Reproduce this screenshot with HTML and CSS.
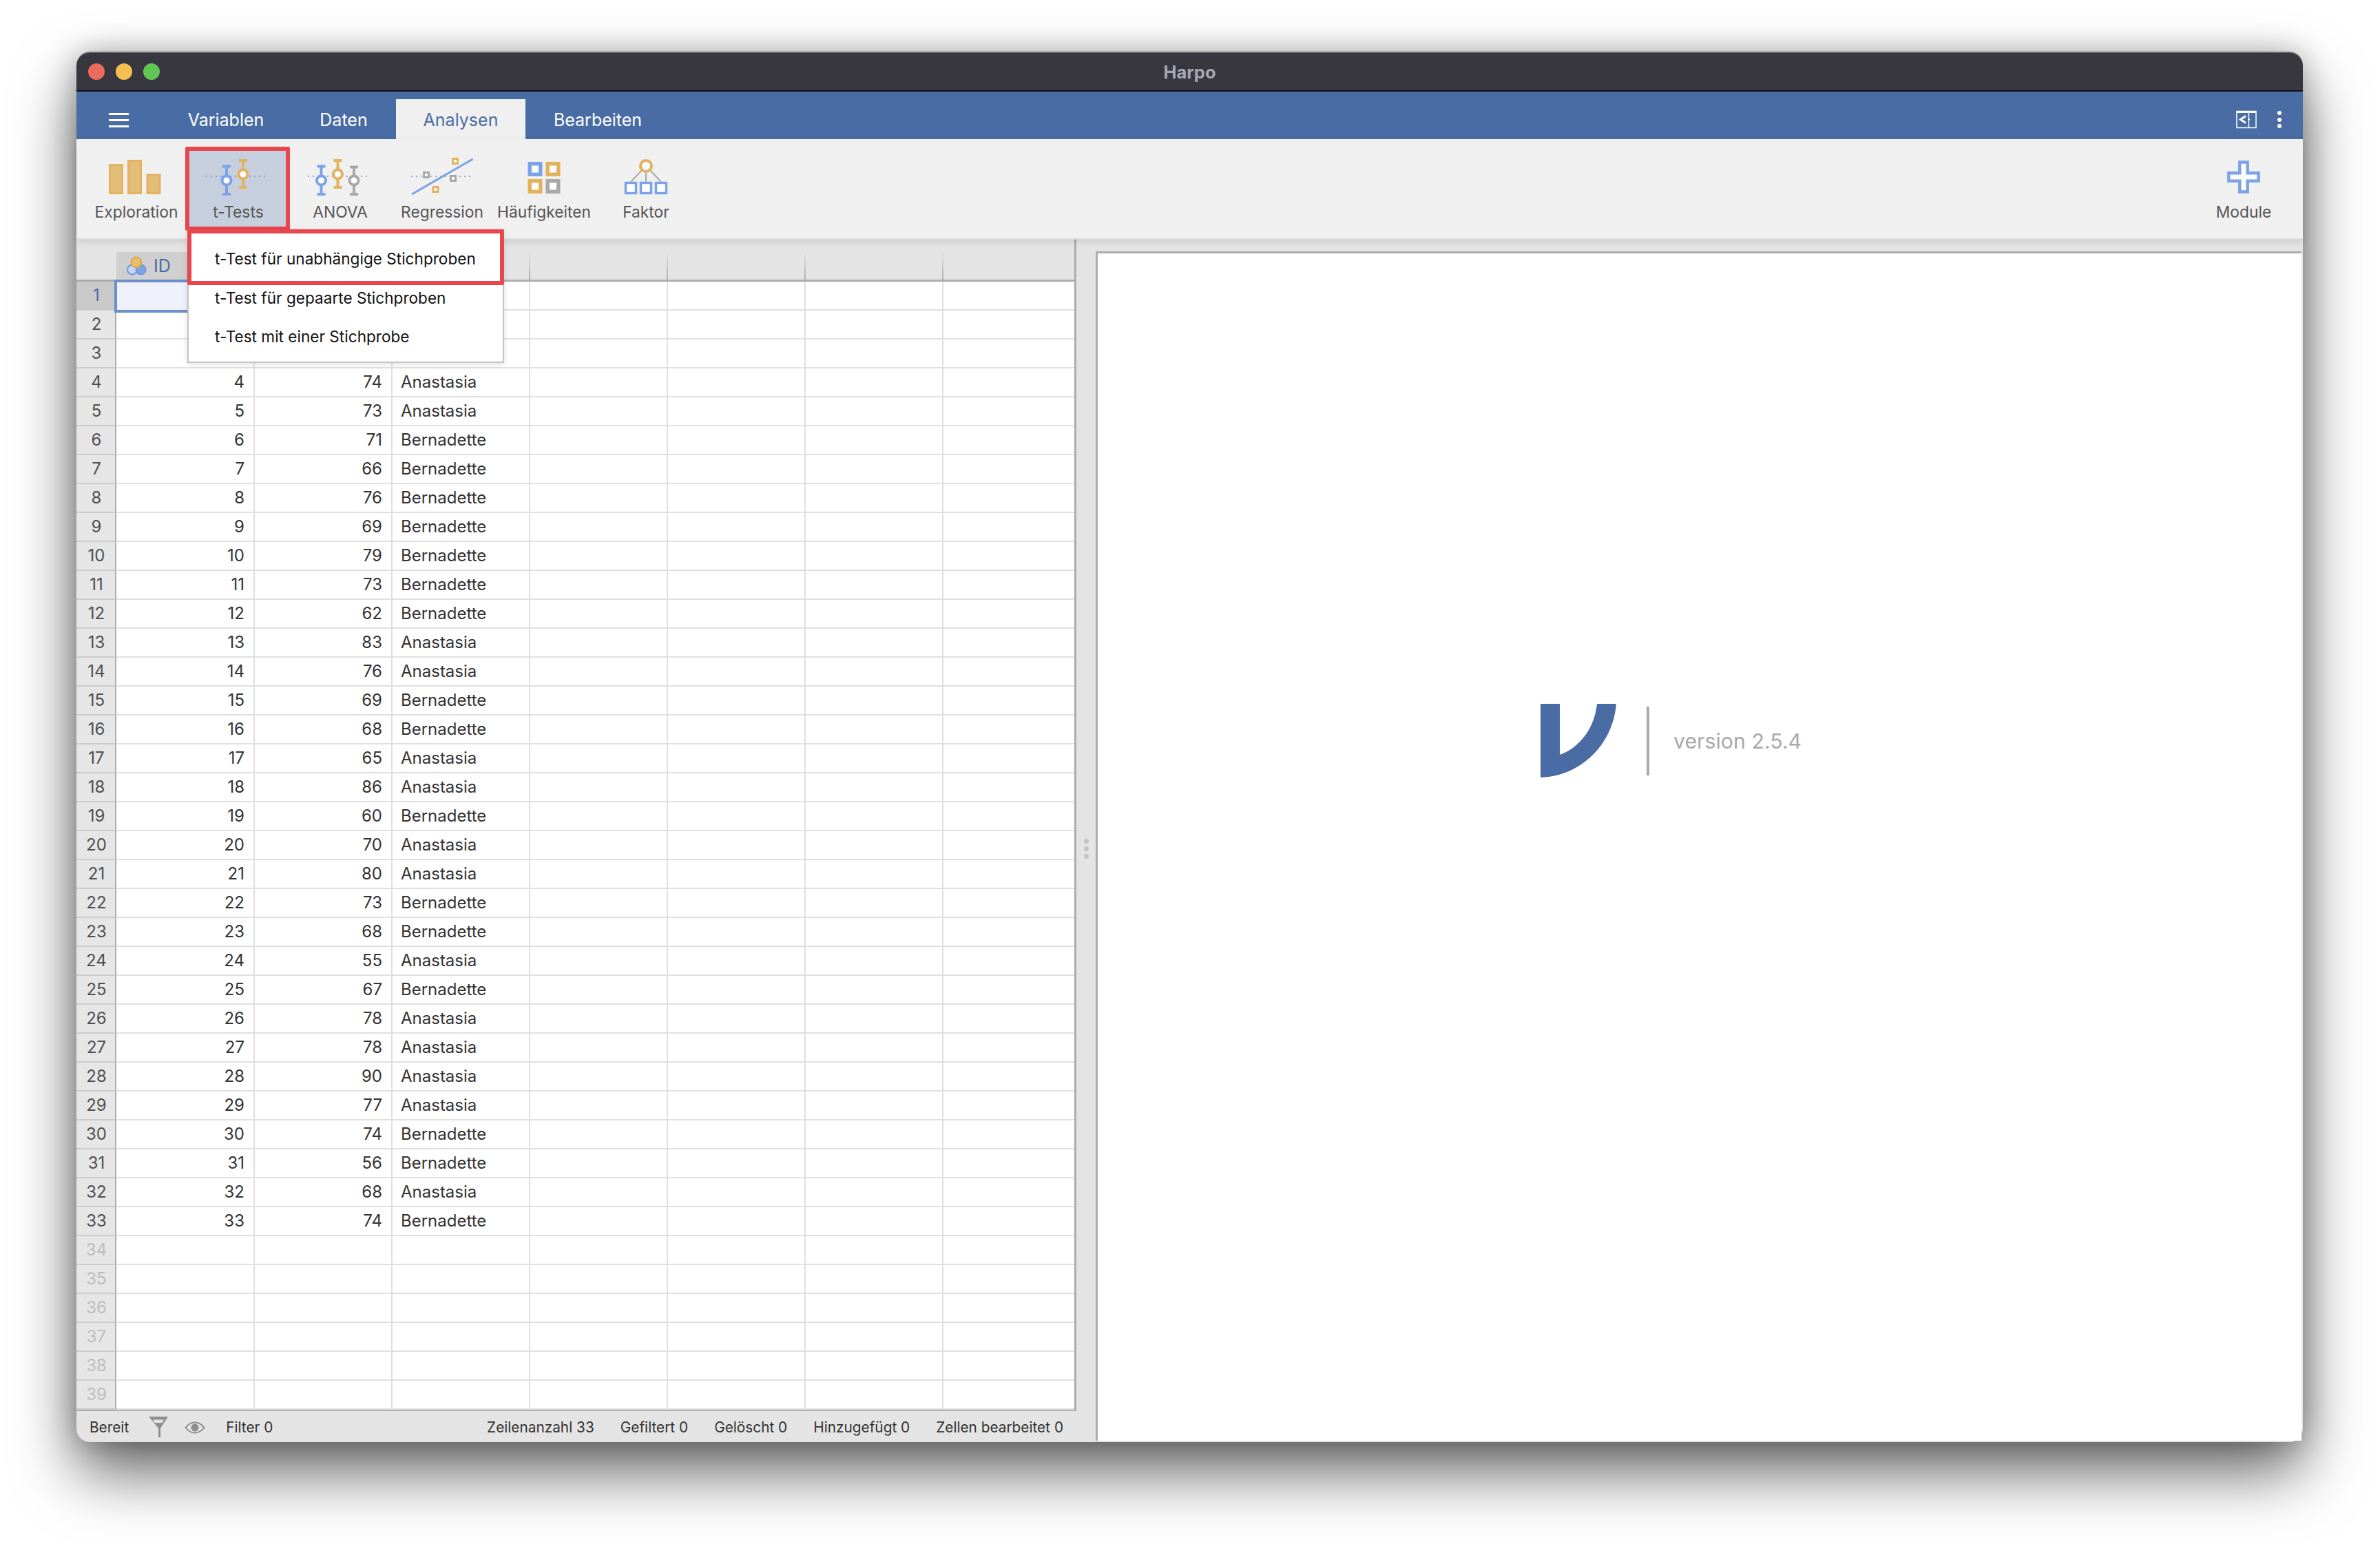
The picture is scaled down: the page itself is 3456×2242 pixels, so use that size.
FILE: index.html
```html
<!DOCTYPE html>
<html lang="de">
  <head>
    <meta charset="UTF-8" />
    <title>Harpo</title>
    <link rel="stylesheet" href="styles.css">
  </head>
  <body>
    <div class="window">
      <div class="titlebar">
        <div class="lights">
          <span class="light red"></span>
          <span class="light yellow"></span>
          <span class="light green"></span>
        </div>
        <div class="title">Harpo</div>
      </div>

      <div class="tabbar">
        <div class="burger"><span></span><span></span><span></span></div>
        <div class="tab tab-variablen">Variablen</div>
        <div class="tab tab-daten">Daten</div>
        <div class="tab tab-analysen">Analysen</div>
        <div class="tab tab-bearbeiten">Bearbeiten</div>
        <div class="tab-tools">
          <svg class="split-icon" width="30" height="27" viewBox="0 0 30 27">
            <rect x="1" y="1.5" width="28" height="24" fill="none" stroke="#fff" stroke-width="1.5" />
            <path d="M1 3h28" stroke="#fff" stroke-width="2" />
            <path d="M18.5 2v23" stroke="#fff" stroke-width="1.5" />
            <path d="M14 8.5L6.5 13.5L14 18.500" fill="none" stroke="#fff" stroke-width="3" />
            <path d="M17 13.500h3" stroke="#fff" stroke-width="1.500" />
          </svg>
          <div class="dots"><span></span><span></span><span></span></div>
        </div>
      </div>

      <div class="toolbar">
        <div class="tool">
          <svg viewBox="0 0 148 60" width="148" height="60">
            <g fill="#e3be78" stroke="#e3b35f" stroke-width="3">
              <rect x="35.500" y="11.500" width="18" height="41" />
              <rect x="62.500" y="5.500" width="18" height="47" />
              <rect x="90" y="26" width="18" height="26.500" />
            </g>
          </svg>
          <div class="tool-label">Exploration</div>
        </div>
        <div class="tool active">
          <svg viewBox="0 0 148 60" width="148" height="60">
            <path d="M27 28H117" stroke="#6f93d6" stroke-width="1.500" stroke-dasharray="2 5" />
            <path d="M51 13.500H63M57 13.500V54M51 54H63" fill="none" stroke="#7ba3e6" stroke-width="4" />
            <circle cx="57" cy="34" r="6.500" fill="#fff" stroke="#7ba3e6" stroke-width="4" />
            <path d="M75 5H87M81 5V44M75 44H87" fill="none" stroke="#e3b25c" stroke-width="4" />
            <circle cx="81" cy="25" r="6.500" fill="#fff" stroke="#e3b25c" stroke-width="4" />
          </svg>
          <div class="tool-label">t-Tests</div>
        </div>
        <div class="tool">
          <svg viewBox="0 0 148 60" width="148" height="60">
            <path d="M27 28H117" stroke="#6f93d6" stroke-width="1.500" stroke-dasharray="2 5" />
            <path d="M40.500 13.500H52.500M46.500 13.500V54M40.500 54H52.500" fill="none" stroke="#7ba3e6" stroke-width="4" />
            <circle cx="46.500" cy="34" r="6.500" fill="#fff" stroke="#7ba3e6" stroke-width="4" />
            <path d="M64.500 5H76.500M70.500 5V44M64.500 44H76.500" fill="none" stroke="#e3b25c" stroke-width="4" />
            <circle cx="70.500" cy="25" r="6.500" fill="#fff" stroke="#e3b25c" stroke-width="4" />
            <path d="M88 14.500H100M94 14.500V54M88 54H100" fill="none" stroke="#a8a8a8" stroke-width="4" />
            <circle cx="94" cy="34" r="6.500" fill="#fff" stroke="#a8a8a8" stroke-width="4" />
          </svg>
          <div class="tool-label">ANOVA</div>
        </div>
        <div class="tool">
          <svg viewBox="0 0 148 60" width="148" height="60">
            <path d="M29 28H120" stroke="#6f93d6" stroke-width="1.500" stroke-dasharray="2 5" />
            <path d="M30 54L118.500 3" stroke="#7ba3e6" stroke-width="3" />
            <g fill="#fff" stroke-width="3">
              <rect x="89.500" y="2.500" width="7" height="7" stroke="#e3b25c" />
              <rect x="47.500" y="22.500" width="7" height="7" stroke="#a8a8a8" />
              <rect x="86.500" y="27.500" width="7" height="7" stroke="#a8a8a8" />
              <rect x="61" y="43.500" width="7" height="7" stroke="#e3b25c" />
            </g>
          </svg>
          <div class="tool-label">Regression</div>
        </div>
        <div class="tool">
          <svg viewBox="0 0 148 60" width="148" height="60">
            <g fill="#fff" stroke-width="5.500">
              <rect x="53.250" y="9.750" width="15.500" height="15.500" stroke="#7ba3e6" />
              <rect x="79.250" y="9.750" width="15.500" height="15.500" stroke="#e3b25c" />
              <rect x="53.250" y="34.750" width="15.500" height="15.500" stroke="#e3b25c" />
              <rect x="79.250" y="34.750" width="15.500" height="15.500" stroke="#a8a8a8" />
            </g>
          </svg>
          <div class="tool-label">Häufigkeiten</div>
        </div>
        <div class="tool">
          <svg viewBox="0 0 148 60" width="148" height="60">
            <path d="M74 13L52 36M74 13V36M74 13L96 36" stroke="#a8a8a8" stroke-width="2" />
            <circle cx="74" cy="13" r="8" fill="#fff" stroke="#e3b25c" stroke-width="4" />
            <g fill="#fff" stroke="#7ba3e6" stroke-width="3.500">
              <rect x="44.500" y="37.500" width="15" height="15" />
              <rect x="66.500" y="37.500" width="15" height="15" />
              <rect x="88.500" y="37.500" width="15" height="15" />
            </g>
          </svg>
          <div class="tool-label">Faktor</div>
        </div>
        <div class="tool tool-module">
          <svg viewBox="0 0 148 60" width="148" height="60">
            <path d="M68.300 7.400H79.700V23.300H95.600V34.700H79.700V50.600H68.300V34.700H52.400V23.300H68.300Z" fill="#fff" stroke="#7ba3e6" stroke-width="4.500" />
          </svg>
          <div class="tool-label">Module</div>
        </div>
      </div>

      <!-- dropdown of the t-Tests button -->
      <div class="menu">
        <div class="menu-marker"></div>
        <div class="menu-item">t-Test für unabhängige Stichproben</div>
        <div class="menu-item">t-Test für gepaarte Stichproben</div>
        <div class="menu-item">t-Test mit einer Stichprobe</div>
      </div>

      <div class="main">
        <div class="data-panel">
          <div class="table-wrap">
            <table class="sheet">
              <colgroup>
                <col class="c-head" /><col class="c-first" /><col class="c-std" /><col class="c-std" />
                <col class="c-std" /><col class="c-std" /><col class="c-std" /><col class="c-last" />
              </colgroup>
              <thead>
                <tr>
                  <th class="corner"></th>
                  <th>
                    <div class="col-head filled">
                      <svg width="40" height="28" viewBox="0 0 40 28">
                        <circle cx="9" cy="19.500" r="7" fill="#c4d6f5" stroke="#6f97e0" stroke-width="2" />
                        <circle cx="21.500" cy="19.500" r="7" fill="#7ba3e6" stroke="#6f97e0" stroke-width="2" />
                        <circle cx="15" cy="9" r="7.500" fill="#e8bd6a" stroke="#d9a64c" stroke-width="2" />
                      </svg>
                      <span class="col-name">ID</span>
                    </div>
                  </th>
                  <th><div class="col-head"></div></th>
                  <th><div class="col-head"></div></th>
                  <th><div class="col-head"></div></th>
                  <th><div class="col-head"></div></th>
                  <th><div class="col-head"></div></th>
                  <th><div class="col-head last"></div></th>
                </tr>
              </thead>
              <tbody>
                <tr><th class="selected">1</th><td class="cursor"></td><td></td><td></td><td></td><td></td><td></td><td></td></tr>
                <tr><th>2</th><td></td><td></td><td></td><td></td><td></td><td></td><td></td></tr>
                <tr><th>3</th><td></td><td></td><td></td><td></td><td></td><td></td><td></td></tr>
                <tr><th>4</th><td>4</td><td>74</td><td class="txt">Anastasia</td><td></td><td></td><td></td><td></td></tr>
                <tr><th>5</th><td>5</td><td>73</td><td class="txt">Anastasia</td><td></td><td></td><td></td><td></td></tr>
                <tr><th>6</th><td>6</td><td>71</td><td class="txt">Bernadette</td><td></td><td></td><td></td><td></td></tr>
                <tr><th>7</th><td>7</td><td>66</td><td class="txt">Bernadette</td><td></td><td></td><td></td><td></td></tr>
                <tr><th>8</th><td>8</td><td>76</td><td class="txt">Bernadette</td><td></td><td></td><td></td><td></td></tr>
                <tr><th>9</th><td>9</td><td>69</td><td class="txt">Bernadette</td><td></td><td></td><td></td><td></td></tr>
                <tr><th>10</th><td>10</td><td>79</td><td class="txt">Bernadette</td><td></td><td></td><td></td><td></td></tr>
                <tr><th>11</th><td>11</td><td>73</td><td class="txt">Bernadette</td><td></td><td></td><td></td><td></td></tr>
                <tr><th>12</th><td>12</td><td>62</td><td class="txt">Bernadette</td><td></td><td></td><td></td><td></td></tr>
                <tr><th>13</th><td>13</td><td>83</td><td class="txt">Anastasia</td><td></td><td></td><td></td><td></td></tr>
                <tr><th>14</th><td>14</td><td>76</td><td class="txt">Anastasia</td><td></td><td></td><td></td><td></td></tr>
                <tr><th>15</th><td>15</td><td>69</td><td class="txt">Bernadette</td><td></td><td></td><td></td><td></td></tr>
                <tr><th>16</th><td>16</td><td>68</td><td class="txt">Bernadette</td><td></td><td></td><td></td><td></td></tr>
                <tr><th>17</th><td>17</td><td>65</td><td class="txt">Anastasia</td><td></td><td></td><td></td><td></td></tr>
                <tr><th>18</th><td>18</td><td>86</td><td class="txt">Anastasia</td><td></td><td></td><td></td><td></td></tr>
                <tr><th>19</th><td>19</td><td>60</td><td class="txt">Bernadette</td><td></td><td></td><td></td><td></td></tr>
                <tr><th>20</th><td>20</td><td>70</td><td class="txt">Anastasia</td><td></td><td></td><td></td><td></td></tr>
                <tr><th>21</th><td>21</td><td>80</td><td class="txt">Anastasia</td><td></td><td></td><td></td><td></td></tr>
                <tr><th>22</th><td>22</td><td>73</td><td class="txt">Bernadette</td><td></td><td></td><td></td><td></td></tr>
                <tr><th>23</th><td>23</td><td>68</td><td class="txt">Bernadette</td><td></td><td></td><td></td><td></td></tr>
                <tr><th>24</th><td>24</td><td>55</td><td class="txt">Anastasia</td><td></td><td></td><td></td><td></td></tr>
                <tr><th>25</th><td>25</td><td>67</td><td class="txt">Bernadette</td><td></td><td></td><td></td><td></td></tr>
                <tr><th>26</th><td>26</td><td>78</td><td class="txt">Anastasia</td><td></td><td></td><td></td><td></td></tr>
                <tr><th>27</th><td>27</td><td>78</td><td class="txt">Anastasia</td><td></td><td></td><td></td><td></td></tr>
                <tr><th>28</th><td>28</td><td>90</td><td class="txt">Anastasia</td><td></td><td></td><td></td><td></td></tr>
                <tr><th>29</th><td>29</td><td>77</td><td class="txt">Anastasia</td><td></td><td></td><td></td><td></td></tr>
                <tr><th>30</th><td>30</td><td>74</td><td class="txt">Bernadette</td><td></td><td></td><td></td><td></td></tr>
                <tr><th>31</th><td>31</td><td>56</td><td class="txt">Bernadette</td><td></td><td></td><td></td><td></td></tr>
                <tr><th>32</th><td>32</td><td>68</td><td class="txt">Anastasia</td><td></td><td></td><td></td><td></td></tr>
                <tr><th>33</th><td>33</td><td>74</td><td class="txt">Bernadette</td><td></td><td></td><td></td><td></td></tr>
                <tr class="unused"><th>34</th><td></td><td></td><td></td><td></td><td></td><td></td><td></td></tr>
                <tr class="unused"><th>35</th><td></td><td></td><td></td><td></td><td></td><td></td><td></td></tr>
                <tr class="unused"><th>36</th><td></td><td></td><td></td><td></td><td></td><td></td><td></td></tr>
                <tr class="unused"><th>37</th><td></td><td></td><td></td><td></td><td></td><td></td><td></td></tr>
                <tr class="unused"><th>38</th><td></td><td></td><td></td><td></td><td></td><td></td><td></td></tr>
                <tr class="unused"><th>39</th><td></td><td></td><td></td><td></td><td></td><td></td><td></td></tr>
              </tbody>
            </table>
          </div>
          <div class="statusbar">
            <span class="status-ready">Bereit</span>
            <svg class="funnel" width="28" height="31" viewBox="0 0 28 31">
              <path d="M0 0H28L17 17V31L14 29.500V17Z" fill="#8e8e8e" />
              <path d="M6 4.500H22L19.500 9H8.500Z" fill="#e4e4e4" />
            </svg>
            <svg class="eye" width="30" height="20" viewBox="0 0 30 20">
              <path d="M1.500 10C9 0 21 0 28.500 10C21 20 9 20 1.500 10Z" fill="none" stroke="#8e8e8e" stroke-width="2" />
              <circle cx="15" cy="10" r="5.500" fill="#8e8e8e" />
            </svg>
            <span class="status-filter">Filter 0</span>
            <span class="status-right">
              <span>Zeilenanzahl 33</span>
              <span>Gefiltert 0</span>
              <span>Gelöscht 0</span>
              <span>Hinzugefügt 0</span>
              <span>Zellen bearbeitet 0</span>
            </span>
          </div>
        </div>

        <div class="splitter"><span></span><span></span><span></span></div>

        <div class="results">
          <div class="brand">
            <svg width="110" height="107" viewBox="0 0 110 107">
              <path d="M0 0H28V74C55 64 78 38 82 0H110C105 60 58 105 0 107Z" fill="#4a6ca5" />
            </svg>
            <span class="brand-line"></span>
            <span class="version">version 2.5.4</span>
          </div>
        </div>
      </div>
    </div>
  </body>
</html>
```

FILE: styles.css
```css
* {
  box-sizing: border-box;
}
html,
body {
  height: 100%;
}
body {
  margin: 0;
  padding: 75px 112px 148px 111px;
  background-color: #fff;
  font-family: Inter, Roboto, "Liberation Sans", sans-serif;
  overflow: hidden;
}
.window {
  position: relative;
  display: flex;
  flex-direction: column;
  height: 2019px;
  border-radius: 20px;
  background-color: #e4e4e4;
  box-shadow: 0 44px 90px rgba(0, 0, 0, 0.6), 0 0 40px rgba(0, 0, 0, 0.25);
}

/* title bar */
.titlebar {
  position: relative;
  display: flex;
  align-items: center;
  justify-content: center;
  flex: none;
  height: 58px;
  border-radius: 20px 20px 0 0;
  border-top: 2px solid #6a6a6e;
  border-bottom: 2px solid #111;
  background-color: #38363f;
}
.lights {
  position: absolute;
  left: 17px;
  top: 15px;
  display: flex;
  gap: 16px;
}
.light {
  width: 24px;
  height: 24px;
  border-radius: 50%;
}
.red {
  background-color: #ec6a5e;
}
.yellow {
  background-color: #f4bf4f;
}
.green {
  background-color: #61c554;
}
.title {
  color: #a8a6b2;
  font-size: 25.500px;
  font-weight: 700;
}

/* tabs */
.tabbar {
  display: flex;
  align-items: flex-end;
  flex: none;
  height: 69px;
  padding-left: 47px;
  background-color: #4a6ca5;
}
.burger {
  display: flex;
  flex-direction: column;
  gap: 6px;
  width: 29px;
  margin-bottom: 17px;
}
.burger span {
  height: 3px;
  background-color: #fff;
}
.tab {
  display: flex;
  align-items: center;
  justify-content: center;
  height: 58px;
  padding-top: 2px;
  color: #fff;
  font-size: 25px;
  white-space: nowrap;
}
.tab-variablen {
  width: 110px;
  margin-left: 86px;
}
.tab-daten {
  width: 70px;
  margin-left: 81px;
}
.tab-analysen {
  width: 188px;
  margin-left: 41px;
  background-color: #f0f0f0;
  color: #4a6ca5;
}
.tab-bearbeiten {
  width: 130px;
  margin-left: 40px;
}
.tab-tools {
  display: flex;
  align-items: center;
  gap: 30px;
  height: 69px;
  margin-left: auto;
  padding: 12px 31px 0 0;
}
.dots {
  display: flex;
  flex-direction: column;
  gap: 3.500px;
}
.dots span {
  width: 6px;
  height: 6px;
  border-radius: 50%;
  background-color: #fff;
}

/* toolbar */
.toolbar {
  position: relative;
  z-index: 2;
  display: flex;
  flex: none;
  height: 146px;
  padding: 11px 12px 0 13px;
  border-bottom: 2px solid #dcdcdc;
  background-color: #f0f0f0;
  box-shadow: 0 3px 10px rgba(0, 0, 0, 0.1);
}
.tool {
  width: 148px;
  height: 122px;
  padding-top: 15px;
  text-align: center;
}
.tool svg {
  display: block;
}
.tool-label {
  margin-top: 5px;
  color: #555;
  font-size: 22.800px;
  line-height: 30px;
  white-space: nowrap;
}
.tool.active {
  position: relative;
  z-index: 0;
}
.tool.active::before {
  content: "";
  position: absolute;
  top: 0;
  left: -3px;
  right: -1px;
  bottom: 0;
  z-index: -1;
  border: 6px solid #e7474d;
  border-radius: 2px;
  background-color: #c6cfde;
}
.tool-module {
  margin-left: auto;
}

/* dropdown */
.menu {
  position: absolute;
  top: 258px;
  left: 161px;
  z-index: 5;
  width: 460px;
  height: 194px;
  padding-top: 15px;
  border: 2px solid #c4c4c4;
  border-top: none;
  background-color: #fff;
  box-shadow: 0 2px 8px rgba(0, 0, 0, 0.12);
}
.menu-marker {
  position: absolute;
  top: 0;
  left: -2px;
  right: -2px;
  height: 81px;
  border: 6px solid #e7474d;
  border-radius: 2px;
}
.menu-item {
  height: 56.500px;
  padding-left: 38px;
  color: #111;
  font-size: 22.600px;
  line-height: 56.500px;
  white-space: nowrap;
}

/* data panel */
.main {
  display: flex;
  flex: 1;
  min-height: 0;
}
.data-panel {
  display: flex;
  flex-direction: column;
  flex: none;
  width: 1452px;
  border-radius: 0 0 0 20px;
  overflow: hidden;
}
.table-wrap {
  flex: none;
  height: 1701px;
  border-right: 3px solid #adadad;
  border-bottom: 2px solid #adadad;
}
.sheet {
  width: 1449px;
  table-layout: fixed;
  border-collapse: separate;
  border-spacing: 0;
  font-size: 24px;
}
.c-head {
  width: 58px;
}
.c-first {
  width: 201px;
}
.c-std {
  width: 200px;
}
.c-last {
  width: 190px;
}
.sheet thead th {
  height: 61px;
  padding: 18px 0 0;
  border-bottom: 3px solid #adadad;
  background-color: #e4e4e4;
  vertical-align: top;
}
.col-head {
  display: flex;
  align-items: center;
  height: 40px;
  padding-left: 14px;
  border-right: 2px solid;
  border-image: linear-gradient(to bottom, #e4e4e4, #adadad) 1;
}
.col-head.filled {
  background-color: #cfcfcf;
}
.col-head.last {
  border-right: none;
}
.col-name {
  color: #4a6ca5;
  font-size: 25px;
  font-weight: 400;
}
.sheet tbody th,
.sheet tbody td {
  height: 42px;
  padding: 0 0 2px;
  border-bottom: 2px solid #e0e0e0;
  border-right: 2px solid #e0e0e0;
  background-color: #fff;
}
.sheet tbody tr td:last-child {
  border-right: none;
}
.sheet tbody th {
  padding-left: 2px;
  border-right: 2px solid #adadad;
  border-bottom: 2px solid #cbcbcb;
  background-color: #e6e6e6;
  color: #4f4f4f;
  font-weight: 400;
  text-align: center;
}
.sheet tbody th.selected {
  background-color: #c9c9c9;
  color: #4a6ca5;
}
.sheet tbody td {
  padding-right: 13px;
  color: #333;
  text-align: right;
}
.sheet tbody td.txt {
  padding: 0 0 2px 12px;
  text-align: left;
}
.sheet tbody td.cursor {
  border-bottom: none;
  outline: 4px solid #6b8fc9;
  outline-offset: -1px;
  background-color: #eef1fa;
}
.sheet tbody tr.unused th {
  color: #bdbdbd;
}

/* status bar */
.statusbar {
  display: flex;
  align-items: center;
  flex: 1;
  padding: 2px 19px 0;
  color: #333;
  font-size: 20.800px;
}
.funnel {
  margin-left: 29px;
}
.eye {
  margin-left: 24px;
}
.status-filter {
  margin-left: 30px;
}
.status-right {
  display: flex;
  gap: 38px;
  margin-left: auto;
}

/* splitter and results */
.splitter {
  display: flex;
  flex-direction: column;
  align-items: center;
  justify-content: center;
  gap: 4px;
  flex: none;
  width: 28px;
  padding-top: 22px;
}
.splitter span {
  width: 7px;
  height: 7px;
  border-radius: 50%;
  background-color: #c4c4c4;
}
.results {
  flex: 1;
  margin: 17px 2px 2px 0;
  padding: 654px 0 0 643px;
  border-top: 3px solid #adadad;
  border-left: 3px solid #adadad;
  background-color: #fff;
}
.brand {
  display: flex;
  align-items: center;
  height: 107px;
}
.brand-line {
  width: 4px;
  height: 100px;
  margin-left: 44px;
  background-color: #aaa;
}
.version {
  margin-left: 35px;
  color: #a9a9a9;
  font-size: 30.300px;
}
```
